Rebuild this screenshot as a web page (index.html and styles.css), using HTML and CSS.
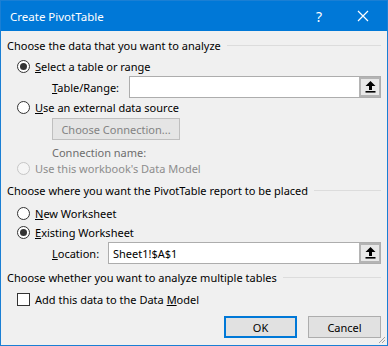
FILE: index.html
```html
<!DOCTYPE html>
<html lang="en">
<head>
  <meta charset="UTF-8">
  <title>Create PivotTable</title>
  <link rel="stylesheet" href="styles.css">
</head>
<body>
  <div class="window">
    <div class="titlebar">
      <span class="title">Create PivotTable</span>
      <span class="help">?</span>
      <svg class="close" width="12" height="12" viewBox="0 0 12 12">
        <path d="M1 1 L11 11 M11 1 L1 11" stroke="#fff" stroke-width="1.2" fill="none"/>
      </svg>
    </div>

    <div class="content">
      <div class="group-head h1"><span>Choose the data that you want to analyze</span><i class="rule"></i></div>

      <label class="option r1"><span class="radio checked"></span><span><u>S</u>elect a table or range</span></label>

      <div class="field tr">
        <span class="field-label"><u>T</u>able/Range:</span>
        <div class="input"><span class="value"></span><span class="pick"><svg width="11" height="12" viewBox="0 0 11 12"><path d="M5.5 0 L10.5 5 L7 5 L7 9 L4 9 L4 5 L0.5 5 Z" fill="#000"/><rect x="0.5" y="10" width="10" height="1.6" fill="#000"/></svg></span></div>
      </div>

      <label class="option r2"><span class="radio"></span><span><u>U</u>se an external data source</span></label>

      <div class="conn-row"><span class="btn disabled">Choose Connection...</span></div>
      <div class="conn-name">Connection name:</div>

      <label class="option r3 disabled"><span class="radio"></span><span>Use this workbook's Data Model</span></label>

      <div class="group-head h2"><span>Choose where you want the PivotTable report to be placed</span><i class="rule"></i></div>

      <label class="option r4"><span class="radio"></span><span><u>N</u>ew Worksheet</span></label>
      <label class="option r5"><span class="radio checked"></span><span><u>E</u>xisting Worksheet</span></label>

      <div class="field loc">
        <span class="field-label"><u>L</u>ocation:</span>
        <div class="input"><span class="value">Sheet1!$A$1</span><span class="pick"><svg width="11" height="12" viewBox="0 0 11 12"><path d="M5.5 0 L10.5 5 L7 5 L7 9 L4 9 L4 5 L0.5 5 Z" fill="#000"/><rect x="0.5" y="10" width="10" height="1.6" fill="#000"/></svg></span></div>
      </div>

      <div class="group-head h3"><span>Choose whether you want to analyze multiple tables</span><i class="rule"></i></div>

      <label class="option cb"><span class="check"></span><span>Add this data to the Data <u>M</u>odel</span></label>

      <div class="actions">
        <span class="btn default">OK</span>
        <span class="btn">Cancel</span>
      </div>
    </div>

    <svg class="grip" width="8" height="8" viewBox="0 0 8 8">
      <path d="M7 1 L1 7 M7 4 L4 7" stroke="#a0a0a0" stroke-width="1" fill="none"/>
    </svg>
  </div>
</body>
</html>
```

FILE: styles.css
```css
html, body {
  margin: 0;
  padding: 0;
}

body {
  font-family: "Noto Sans", "Open Sans", sans-serif;
  font-size: 11px;
  color: #000;
  background-color: #f0f0f0;
}

.window {
  position: relative;
  width: 388px;
  height: 346px;
  box-sizing: border-box;
  border: 1px solid #1a7fd4;
  background-color: #f0f0f0;
}

/* Title bar */
.titlebar {
  height: 30px;
  background-color: #0078d7;
  color: #fff;
  display: flex;
  align-items: center;
}

.title {
  margin-left: 9px;
  flex: 1;
  font-size: 11.5px;
}

.help {
  font-size: 14px;
  width: 14px;
  margin-right: 31px;
  text-align: center;
}

.close {
  margin-right: 18px;
}

/* Content */
.content {
  padding: 5px 6px 0 6px;
  display: flex;
  flex-direction: column;
}

.group-head {
  height: 18px;
  display: flex;
  align-items: center;
  white-space: nowrap;
}

.group-head .rule {
  flex: 1;
  height: 1px;
  background-color: #dcdcdc;
  margin-left: 6px;
}

.option {
  display: flex;
  align-items: center;
  height: 18px;
  padding-left: 10px;
  white-space: nowrap;
}

.option.disabled {
  color: #8d8d8d;
}

.radio {
  width: 11px;
  height: 11px;
  border: 1px solid #333;
  border-radius: 50%;
  background-color: #fff;
  margin-right: 5px;
  position: relative;
  flex-shrink: 0;
}

.radio.checked::after {
  content: "";
  position: absolute;
  left: 2px;
  top: 2px;
  width: 7px;
  height: 7px;
  border-radius: 50%;
  background-color: #333;
}

.option.disabled .radio {
  border-color: #c6c6c6;
  background-color: #f5f5f5;
}

.check {
  width: 11px;
  height: 11px;
  border: 1px solid #333;
  background-color: #fff;
  margin-right: 5px;
  flex-shrink: 0;
}

.r1 { margin-top: 2px; height: 20px; }
.r3 { height: 14px; }
.r4 { margin-top: 5px; }
.r5 { margin-top: 1px; }
.cb { margin-top: 4px; }
.h2 { margin-top: 6px; }
.h3 { margin-top: 4px; }

/* Reference fields */
.field {
  display: flex;
  align-items: center;
  height: 22px;
  padding-left: 45px;
}

.loc { margin-top: 1px; }

.field-label {
  white-space: nowrap;
}

.tr .field-label { width: 77px; }
.loc .field-label { width: 56px; }

.input {
  flex: 1;
  height: 22px;
  box-sizing: border-box;
  border: 1px solid #adadad;
  background-color: #fff;
  display: flex;
  align-items: center;
}

.input .value {
  flex: 1;
  padding-left: 4px;
}

.pick {
  width: 21px;
  height: 20px;
  box-sizing: border-box;
  border: 2px solid #b4b4b4;
  border-right-width: 1px;
  background-color: #e8e8e8;
  display: flex;
  align-items: center;
  justify-content: center;
}

/* Buttons */
.btn {
  display: flex;
  align-items: center;
  justify-content: center;
  width: 73px;
  height: 22px;
  box-sizing: border-box;
  border: 1px solid #adadad;
  background-color: #e1e1e1;
}

.btn.default {
  border: 2px solid #0078d7;
}

.conn-row {
  margin-top: 2px;
  padding-left: 45px;
}

.btn.disabled {
  width: 128px;
  color: #838383;
  border-color: #bfbfbf;
  background-color: #e5e5e5;
}

.conn-name {
  margin-top: 3px;
  height: 18px;
  display: flex;
  align-items: center;
  padding-left: 45px;
  color: #6d6d6d;
}

.actions {
  margin-top: 8px;
  display: flex;
  justify-content: flex-end;
  gap: 11px;
}

.grip {
  position: absolute;
  right: 1px;
  bottom: 1px;
}
```
